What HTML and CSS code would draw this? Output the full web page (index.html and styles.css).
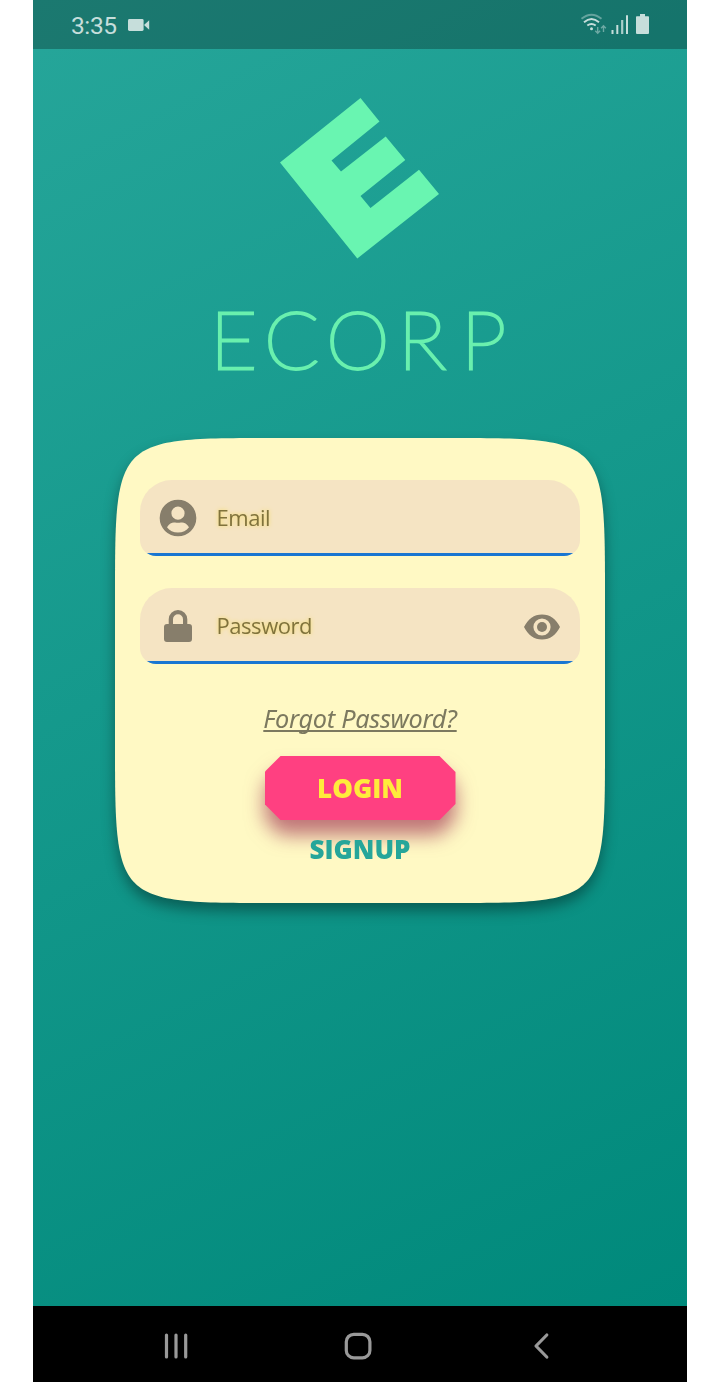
FILE: index.html
```html
<!DOCTYPE html>
<html lang="en">
<head>
<meta charset="utf-8">
<title>ECORP Login</title>
<link rel="stylesheet" href="styles.css">
</head>
<body>
<div class="phone">
  <header class="status">
    <span class="clock">3:35</span>
    <svg class="camera" width="22" height="14" viewBox="0 0 22 14"><rect x="0" y="1" width="15.6" height="12" rx="1.4"/><path d="M16 7l5.2-4.8v9.6z"/></svg>
    <svg class="signals" width="70" height="24" viewBox="0 0 70 24">
      <g fill="none" stroke="#c6dedb" stroke-width="1.9">
        <path d="M1.5 6.8Q11.5-1.5 21.5 6.8" opacity=".45"/>
        <path d="M4 10.2Q11.5 3.6 19 10.2"/>
        <path d="M7.3 13.6Q11.5 10.2 15.7 13.6"/>
        <path d="M17.7 15v6M15.3 18.8l2.4 2.4 2.4-2.4M23.5 20v-6M21.1 16.2l2.4-2.4 2.4 2.4" stroke-width="1.4" opacity=".5"/>
      </g>
      <circle cx="11.5" cy="16.7" r="1.5"/>
      <path d="M31.5 18h2v4h-2zM36.3 13h2v9h-2zM46 3.3h2V22h-2z"/>
      <path d="M41.1 8h2.2v14h-2.2z" opacity=".85"/>
      <path d="M60 2h5v2.2h3.2q.8 0 .8.8v16q0 1-1 1H57q-1 0-1-1V5q0-.8.8-.8H60z"/>
    </svg>
  </header>
  <main class="screen">
    <svg class="logo" width="160" height="162" viewBox="0 0 160 162"><path d="M80.5 0L99.5 23.5L51.5 62.5L61 73.5L105.7 38.5L125.3 62L80.5 98L90.5 110L139 71.8L159 96L77.3 160.5L0 64.5Z"/></svg>
    <h1 class="brand"><span class="l-e">E</span><span class="l-c">C</span><span class="l-o">O</span><span class="l-r">R</span><span class="l-p">P</span></h1>
    <div class="card-shadow">
      <form class="card">
        <div class="field">
          <svg class="icon" width="44" height="44" viewBox="0 0 24 24"><path fill-rule="evenodd" d="M12 2a10 10 0 1 0 0 20a10 10 0 0 0 0-20zM12 5.75a3.6 3.6 0 1 1 0 7.2a3.6 3.6 0 0 1 0-7.2zM6 17C7.4 14.9 9 14.2 10.4 14.5Q12 14.8 13.6 14.5C15 14.2 16.6 14.9 18 17C16.7 18.9 14.5 19.9 12 19.9S7.3 18.9 6 17z"/></svg>
          <span class="label">Email</span>
        </div>
        <div class="field">
          <svg class="icon" width="44" height="44" viewBox="0 0 44 44"><path fill-rule="evenodd" d="M12.7 20v-4.8a9.3 9.3 0 0 1 18.6 0V20H33q3 0 3 3v12q0 3-3 3H11q-3 0-3-3V23q0-3 3-3zM17 20h10v-4.8a5 5 0 0 0-10 0z"/></svg>
          <span class="label">Password</span>
          <svg class="eye" width="38" height="28" viewBox="0 0 38 28"><path fill-rule="evenodd" d="M1 14C5 6 11 1.5 19 1.5S33 6 37 14C33 22 27 26.5 19 26.5S5 22 1 14zM19 5.4a8.6 8.6 0 1 0 0 17.2a8.6 8.6 0 0 0 0-17.2z"/><circle cx="19" cy="14" r="5"/></svg>
        </div>
        <a class="forgot">Forgot Password?</a>
        <div class="login-shadow"><div class="login">LOGIN</div></div>
        <a class="signup">SIGNUP</a>
      </form>
    </div>
  </main>
  <nav class="nav">
    <svg width="26" height="28" viewBox="0 0 26 28"><path d="M3.5 3v22M13 3v22M22.7 3v22"/></svg>
    <svg class="home" width="28" height="28" viewBox="0 0 28 28"><rect x="2.3" y="2.3" width="23.6" height="23.6" rx="7.5"/></svg>
    <svg width="18" height="28" viewBox="0 0 18 28"><path d="M14.8 3L4 14l10.8 11"/></svg>
  </nav>
</div>
</body>
</html>
```
FILE: styles.css
```css
body { margin: 0; background: #fff; font-family: "Open Sans", "Noto Sans", sans-serif; }
.phone { width: 654px; height: 1382px; margin-left: 33px; display: flex; flex-direction: column; background: linear-gradient(153.4deg, #26a69a, #00897b) 0 0 / 654px 1306px no-repeat; }
.status { height: 49px; box-sizing: border-box; display: flex; align-items: center; padding: 0 37px 0 38px; background: rgba(0, 0, 0, .27); color: #c6dedb; fill: #c6dedb; }
.clock { font: 24.5px/30px Roboto, sans-serif; letter-spacing: -.4px; padding-top: 3px; width: 57px; }
.camera { margin-top: 1px; }
.signals { margin: -1px 0 0 auto; }
.screen { flex: 1; display: flex; flex-direction: column; align-items: center; }
.logo { margin-top: 49px; fill: #69f5b1; }
.brand { display: flex; margin: 28px 0 0 35px; height: 102px; align-self: flex-start; padding-left: 142px; font: 200 81px/100px Lato, sans-serif; color: #69f0ae; -webkit-text-stroke: 2.9px #69f0ae; stroke-linejoin: round; }
.brand span { display: block; }
.l-e { width: 54px; }
.l-c { width: 62px; }
.l-o { width: 72px; }
.l-r { width: 63px; }
.card-shadow { margin-top: 48px; filter: drop-shadow(0 8px 7px rgba(0, 0, 0, .36)); }
.card { width: 490px; height: 465px; box-sizing: border-box; padding: 42px 25px 0; display: flex; flex-direction: column; align-items: center; background: #fff9c4; clip-path: path("M0 159C0 0 0 0 159 0H331C490 0 490 0 490 159V306C490 465 490 465 331 465H159C0 465 0 465 0 306Z"); }
.field { width: 440px; height: 76px; flex: none; box-sizing: border-box; margin-bottom: 32px; padding: 0 20px 0 15.5px; display: flex; align-items: center; background: linear-gradient(#1976d2, #1976d2) 0 100% / 100% 3px no-repeat #f5e4c3; border-radius: 32px 32px 16px 16px; fill: #877e6b; }
.label { margin: -2px 0 0 17px; font-size: 22px; letter-spacing: -.45px; line-height: 28px; color: #80733c; text-shadow: 0 0 4px #f4dc60; }
.eye { margin: 2px -1px 0 auto; }
.forgot { margin-top: 5px; font-family: "Noto Sans", sans-serif; font-size: 25.3px; letter-spacing: -.3px; line-height: 34px; font-style: italic; color: #7c795f; text-decoration: underline; text-decoration-thickness: 1.5px; text-underline-offset: 1.5px; text-decoration-skip-ink: none; }
.login-shadow { margin-top: 21px; filter: drop-shadow(0 15px 9.5px rgba(150, 30, 70, .6)); }
.login { width: 191px; height: 64px; font-weight: 800; font-size: 26px; line-height: 65px; text-align: center; color: #ffeb3b; background: #ff4081; clip-path: polygon(16px 0, 175px 0, 191px 16px, 191px 48px, 175px 64px, 16px 64px, 0 48px, 0 16px); }
.signup { position: relative; margin-top: 11px; font-weight: 800; font-size: 26px; line-height: 36px; color: #26a69a; }
.nav { height: 76px; box-sizing: border-box; display: flex; align-items: center; justify-content: space-between; padding: 4px 137px 0 130px; background: #000; fill: none; stroke: #999; stroke-width: 3.2; stroke-linecap: round; stroke-linejoin: round; }
.home { margin-right: 5px; }
```
